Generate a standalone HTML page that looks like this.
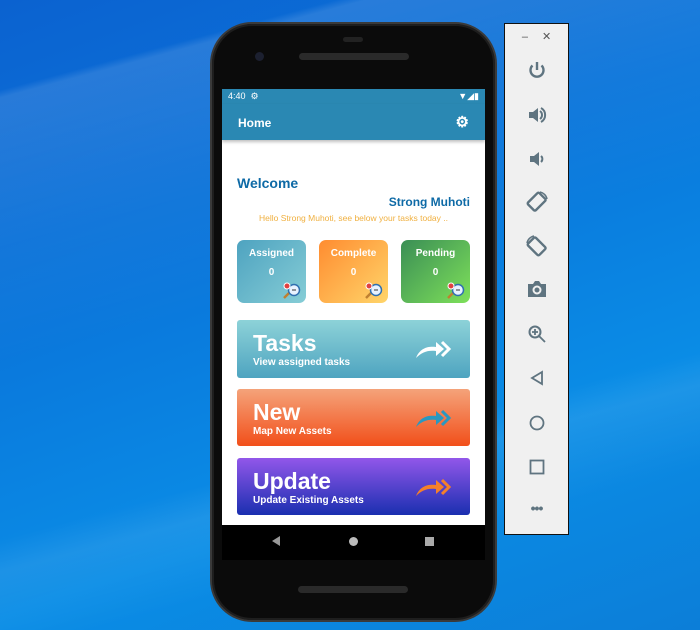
<!DOCTYPE html>
<html><head><style>
*{margin:0;padding:0;box-sizing:border-box}
body{width:700px;height:630px;overflow:hidden;position:relative;font-family:"Liberation Sans",sans-serif;
background:linear-gradient(160deg,#0b62d0 0%,#0a78dc 40%,#0a8de6 70%,#0c7ed8 100%)}
.beam{position:absolute;left:0;top:0;width:700px;height:630px;
background:linear-gradient(165deg,transparent 0%,transparent 11%,rgba(255,255,255,0.12) 12%,rgba(255,255,255,0.04) 30%,transparent 45%,transparent 66%,rgba(255,255,255,0.08) 70%,transparent 80%)}
.phone{position:absolute;left:210px;top:22px;width:287px;height:600px;border-radius:42px;background:#0b0b0b;border:2px solid #3a3a3a;box-shadow:inset 0 0 0 2px #1e1e1e}
.screen{position:absolute;left:222px;top:89px;width:263px;height:436px;background:#fff;overflow:hidden}
.sb{height:15px;background:#2a88b3;color:#fff;font-size:9px;padding:2px 6px}
.ab{height:36px;background:#2a88b3;color:#fff;font-weight:bold;font-size:12px;padding:12px 16px;box-shadow:0 2px 3px rgba(0,0,0,.25);position:relative}
.card{position:absolute;top:151px;width:69px;height:63px;border-radius:7px;color:#fff;font-size:10px;font-weight:bold;text-align:center;padding-top:8px}
.card .n{margin-top:8px;font-size:10px}
.card svg{position:absolute;right:4px;bottom:3px}
.big{position:absolute;left:15px;width:233px;border-radius:3px;color:#fff;padding:10px 16px}
.big h2{font-size:23px;font-weight:bold;line-height:26px}
.big p{font-size:10px;font-weight:bold;margin-top:1px}
.big svg{position:absolute;right:16px;top:18px}
.panel{position:absolute;left:504px;top:23px;width:65px;height:512px;background:#f0f0f0;border:1px solid #111}
.pi{position:absolute;left:0;width:63px;text-align:center;color:#5f7480}
</style></head><body>
<div class="beam"></div>
<div class="phone"></div>
<div style="position:absolute;left:299px;top:53px;width:110px;height:7px;border-radius:4px;background:#2a2a2a"></div>
<div style="position:absolute;left:343px;top:37px;width:20px;height:5px;border-radius:3px;background:#222"></div>
<div style="position:absolute;left:255px;top:52px;width:9px;height:9px;border-radius:50%;background:#1c2030"></div>
<div style="position:absolute;left:298px;top:586px;width:110px;height:7px;border-radius:4px;background:#2a2a2a"></div>
<div class="screen">
 <div class="sb">4:40 &nbsp;⚙<span style="float:right">▼◢▮</span></div>
 <div class="ab">Home<span style="position:absolute;right:16px;top:9px;font-size:15px">⚙</span></div>
 <div style="position:absolute;left:15px;top:86px;color:#0e6aa6;font-weight:bold;font-size:14px">Welcome</div>
 <div style="position:absolute;right:15px;top:106px;color:#0e6aa6;font-weight:bold;font-size:12px">Strong Muhoti</div>
 <div style="position:absolute;left:0;width:263px;text-align:center;top:124px;color:#f0b040;font-size:8.5px">Hello Strong Muhoti, see below your tasks today ..</div>
 <div class="card" style="left:15px;background:linear-gradient(135deg,#4ea3c0,#86cdd6)">Assigned<div class="n">0</div><svg width="20" height="18" viewBox="0 0 20 18"><path d="M2 16l6-6" stroke="#c08030" stroke-width="2.5"/><circle cx="12" cy="8" r="5.5" fill="#e8f2ff" stroke="#2f6fb0" stroke-width="1.5"/><circle cx="5" cy="4" r="3" fill="#e04040" stroke="#fff"/><path d="M10 8h4" stroke="#333"/></svg></div>
 <div class="card" style="left:97px;background:linear-gradient(135deg,#ff8c30,#ffd56a)">Complete<div class="n">0</div><svg width="20" height="18" viewBox="0 0 20 18"><path d="M2 16l6-6" stroke="#c08030" stroke-width="2.5"/><circle cx="12" cy="8" r="5.5" fill="#e8f2ff" stroke="#2f6fb0" stroke-width="1.5"/><circle cx="5" cy="4" r="3" fill="#e04040" stroke="#fff"/><path d="M10 8h4" stroke="#333"/></svg></div>
 <div class="card" style="left:179px;background:linear-gradient(135deg,#3a8e55,#7ee05a)">Pending<div class="n">0</div><svg width="20" height="18" viewBox="0 0 20 18"><path d="M2 16l6-6" stroke="#c08030" stroke-width="2.5"/><circle cx="12" cy="8" r="5.5" fill="#e8f2ff" stroke="#2f6fb0" stroke-width="1.5"/><circle cx="5" cy="4" r="3" fill="#e04040" stroke="#fff"/><path d="M10 8h4" stroke="#333"/></svg></div>
 <div class="big" style="top:231px;height:58px;background:linear-gradient(180deg,#8dd2d8,#4ea4c0)"><h2>Tasks</h2><p>View assigned tasks</p>
  <svg width="40" height="22" viewBox="0 0 40 22"><path d="M2 20 C6 10 14 8 22 9 L22 4 L30 11 L22 18 L22 13 C14 12 8 14 2 20Z" fill="#fff"/><path d="M28 4 L35 11 L28 18" stroke="#fff" stroke-width="3" fill="none"/></svg></div>
 <div class="big" style="top:300px;height:57px;background:linear-gradient(180deg,#f4a37a,#f24f1a)"><h2>New</h2><p>Map New Assets</p>
  <svg width="40" height="22" viewBox="0 0 40 22"><path d="M2 20 C6 10 14 8 22 9 L22 4 L30 11 L22 18 L22 13 C14 12 8 14 2 20Z" fill="#2a98c0"/><path d="M28 4 L35 11 L28 18" stroke="#2a98c0" stroke-width="3" fill="none"/></svg></div>
 <div class="big" style="top:369px;height:57px;background:linear-gradient(180deg,#9257ea,#1a2fb0)"><h2>Update</h2><p>Update Existing Assets</p>
  <svg width="40" height="22" viewBox="0 0 40 22"><path d="M2 20 C6 10 14 8 22 9 L22 4 L30 11 L22 18 L22 13 C14 12 8 14 2 20Z" fill="#f5802a"/><path d="M28 4 L35 11 L28 18" stroke="#f5802a" stroke-width="3" fill="none"/></svg></div>
</div>
<div style="position:absolute;left:222px;top:525px;width:263px;height:35px;background:#000"></div>
<div style="position:absolute;left:272px;top:536px;width:0;height:0;border-top:5px solid transparent;border-bottom:5px solid transparent;border-right:8px solid #999"></div>
<div style="position:absolute;left:349px;top:537px;width:9px;height:9px;border-radius:50%;background:#bbb"></div>
<div style="position:absolute;left:425px;top:537px;width:9px;height:9px;background:#aaa"></div>
<div class="panel">
 <div class="pi" style="top:6px;font-size:11px;color:#555"><span style="margin-right:14px">–</span>✕</div>
 <svg class="pi" style="top:36px;left:22px;width:20px" width="20" height="20" viewBox="0 0 20 20"><path d="M10 2v8" stroke="#5f7480" stroke-width="2.4"/><path d="M5.5 5.5a6.5 6.5 0 1 0 9 0" stroke="#5f7480" stroke-width="2.4" fill="none"/></svg>
 <svg class="pi" style="top:81px;left:21px;width:22px" width="22" height="20" viewBox="0 0 22 20"><path d="M3 7h4l5-4v14l-5-4H3z" fill="#5f7480"/><path d="M14 6a5 5 0 0 1 0 8M15 3a8 8 0 0 1 0 14" stroke="#5f7480" stroke-width="2" fill="none"/></svg>
 <svg class="pi" style="top:126px;left:23px;width:18px" width="18" height="18" viewBox="0 0 18 18"><path d="M2 6h4l5-4v14l-5-4H2z" fill="#5f7480"/><path d="M13 6a4 4 0 0 1 0 6" stroke="#5f7480" stroke-width="2" fill="none"/></svg>
 <svg class="pi" style="top:166px;left:20px;width:24px" width="24" height="24" viewBox="0 0 24 24"><rect x="6" y="4" width="11" height="16" rx="1.5" transform="rotate(45 12 12)" stroke="#5f7480" stroke-width="2.4" fill="none"/><path d="M15 2a9 9 0 0 1 7 7" stroke="#5f7480" stroke-width="1.5" fill="none"/></svg>
 <svg class="pi" style="top:210px;left:20px;width:24px" width="24" height="24" viewBox="0 0 24 24"><rect x="7" y="4" width="11" height="16" rx="1.5" transform="rotate(-45 12 12) translate(-1 0)" stroke="#5f7480" stroke-width="2.4" fill="none"/><path d="M2 9a9 9 0 0 1 7-7" stroke="#5f7480" stroke-width="1.5" fill="none"/></svg>
 <svg class="pi" style="top:256px;left:22px;width:20px" width="20" height="18" viewBox="0 0 20 18"><path d="M1 4h5l2-3h4l2 3h5v13H1z" fill="#5f7480"/><circle cx="10" cy="10" r="3.5" fill="none" stroke="#f0f0f0" stroke-width="2"/></svg>
 <svg class="pi" style="top:300px;left:22px;width:20px" width="20" height="20" viewBox="0 0 20 20"><circle cx="8" cy="8" r="5.5" stroke="#5f7480" stroke-width="2" fill="none"/><path d="M12 12l6 6M8 5v6M5 8h6" stroke="#5f7480" stroke-width="1.8"/></svg>
 <svg class="pi" style="top:346px;left:24px;width:16px" width="16" height="16" viewBox="0 0 16 16"><path d="M13 2L3 8l10 6z" stroke="#5f7480" stroke-width="1.8" fill="none"/></svg>
 <svg class="pi" style="top:390px;left:23px;width:18px" width="18" height="18" viewBox="0 0 18 18"><circle cx="9" cy="9" r="6.5" stroke="#5f7480" stroke-width="1.8" fill="none"/></svg>
 <svg class="pi" style="top:434px;left:23px;width:18px" width="18" height="18" viewBox="0 0 18 18"><rect x="2.5" y="2.5" width="13" height="13" stroke="#5f7480" stroke-width="1.8" fill="none"/></svg>
 <div class="pi" style="top:476px;font-size:14px;letter-spacing:-1px;font-weight:bold">•••</div>
</div>
</body></html>
